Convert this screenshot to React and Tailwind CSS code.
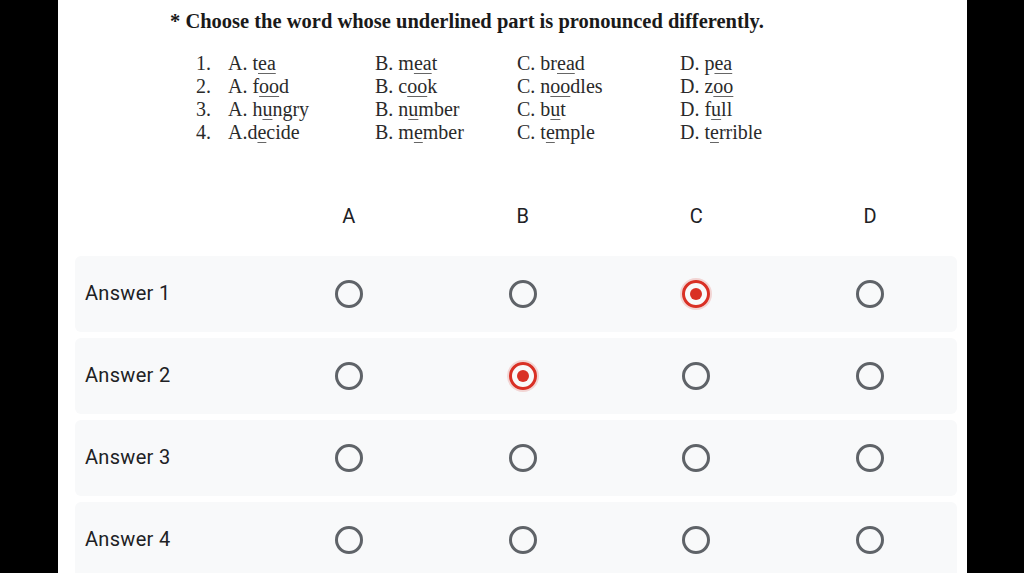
import React from "react";

const serif = { fontFamily: '"Liberation Serif", "Times New Roman", serif' };
const roboto = { fontFamily: 'Roboto, "Noto Sans", sans-serif' };

function W({ pre, u, post }) {
  return (
    <span>
      {pre}
      <span className="underline decoration-[1px] decoration-[#666] underline-offset-[3px]">{u}</span>
      {post}
    </span>
  );
}

const rows = [
  ["1.", ["A. t", "ea", ""], ["B. m", "ea", "t"], ["C. br", "ea", "d"], ["D. p", "ea", ""]],
  ["2.", ["A. f", "oo", "d"], ["B. c", "oo", "k"], ["C. n", "oo", "dles"], ["D. z", "oo", ""]],
  ["3.", ["A. h", "u", "ngry"], ["B. n", "u", "mber"], ["C. b", "u", "t"], ["D. f", "u", "ll"]],
  ["4.", ["A.d", "e", "cide"], ["B. m", "e", "mber"], ["C. t", "e", "mple"], ["D. t", "e", "rrible"]],
];

const answers = [2, 1, -1, -1];

function Radio({ on }) {
  if (on) {
    return (
      <div className="w-[28px] h-[28px] rounded-full border-[3px] border-[#d93025] flex items-center justify-center shadow-[0_0_0_2px_rgba(217,48,37,0.18)]">
        <div className="w-[12px] h-[12px] rounded-full bg-[#d93025]" />
      </div>
    );
  }
  return <div className="w-[28px] h-[28px] rounded-full border-[3px] border-[#5f6368]" />;
}

export default function App() {
  return (
    <div className="w-[1024px] h-[573px] bg-black overflow-hidden flex">
      <div className="ml-[58px] w-[909px] h-full bg-white flex flex-col">
        <div style={serif} className="text-[#1a1a1a]">
          <div className="pl-[112px] pt-[7px] text-[20.5px] leading-[28px] font-bold">
            * Choose the word whose underlined part is pronounced differently.
          </div>
          <div className="mt-[17px] pl-[138px] text-[20px] leading-[23px] text-[#2a2a2a]">
            {rows.map((r, i) => (
              <div key={i} className="grid grid-cols-[32px_147px_142px_163px_1fr]">
                <span>{r[0]}</span>
                <W pre={r[1][0]} u={r[1][1]} post={r[1][2]} />
                <W pre={r[2][0]} u={r[2][1]} post={r[2][2]} />
                <W pre={r[3][0]} u={r[3][1]} post={r[3][2]} />
                <W pre={r[4][0]} u={r[4][1]} post={r[4][2]} />
              </div>
            ))}
          </div>
        </div>

        <div style={roboto} className="ml-[17px] mr-[10px] mt-[56px] text-[#202124]">
          <div className="grid grid-cols-[187px_repeat(4,1fr)] h-[32px] items-center text-[20px]">
            <div />
            {["A", "B", "C", "D"].map((l) => (
              <div key={l} className="text-center">{l}</div>
            ))}
          </div>
          <div className="mt-[24px] flex flex-col gap-[6px]">
            {answers.map((sel, i) => (
              <div
                key={i}
                className="grid grid-cols-[187px_repeat(4,1fr)] h-[76px] items-center bg-[#f8f9fa] rounded-[6px]"
              >
                <div className="pl-[10px] pb-[3px] text-[20px] tracking-[0.3px]">Answer {i + 1}</div>
                {[0, 1, 2, 3].map((c) => (
                  <div key={c} className="flex justify-center">
                    <Radio on={sel === c} />
                  </div>
                ))}
              </div>
            ))}
          </div>
        </div>
      </div>
    </div>
  );
}
